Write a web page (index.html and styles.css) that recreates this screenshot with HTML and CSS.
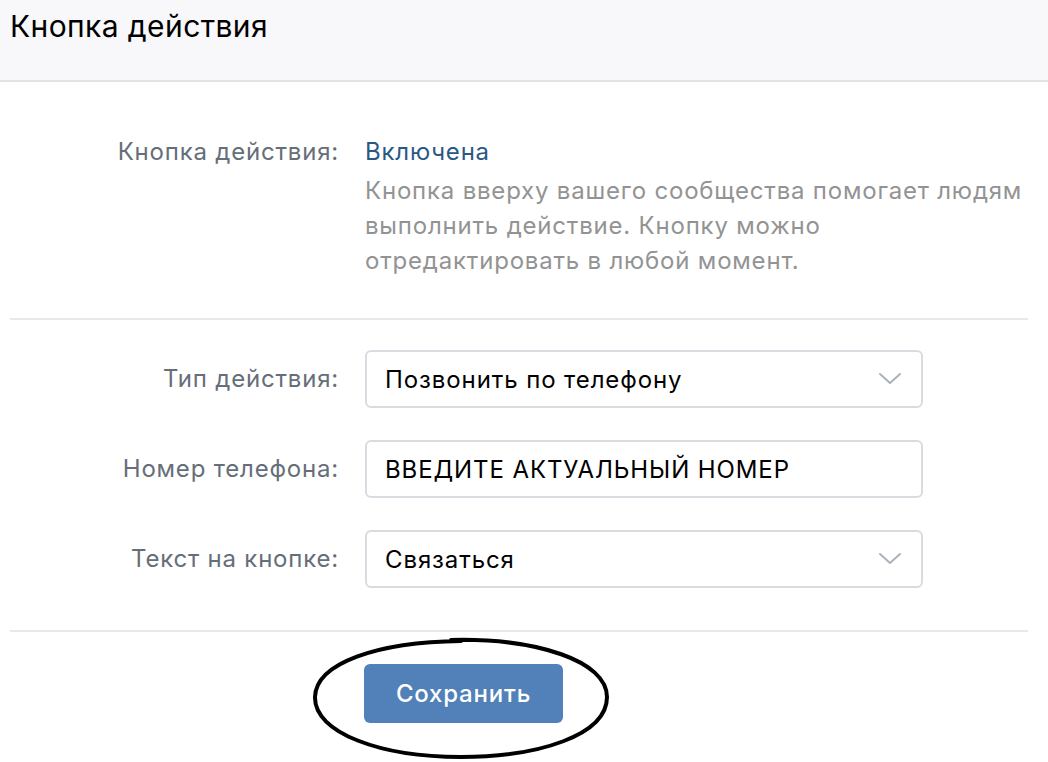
FILE: index.html
```html
<!DOCTYPE html>
<html lang="ru">
<head>
    <meta charset="UTF-8">
    <meta name="viewport" content="width=device-width, initial-scale=1.0">
    <title>Кнопка действия</title>
    <link rel="stylesheet" href="styles.css">
</head>
<body>
    <div class="page-header">
        <h1>Кнопка действия</h1>
    </div>

    <div class="section">
        <div class="row row-top">
            <div class="label">Кнопка действия:</div>
            <div class="value">
                <a class="status-link" href="#">Включена</a>
                <p class="hint">Кнопка вверху вашего сообщества помогает людям выполнить действие. Кнопку можно отредактировать в любой момент.</p>
            </div>
        </div>
    </div>

    <div class="divider"></div>

    <div class="section section-form">
        <div class="row">
            <div class="label">Тип действия:</div>
            <div class="field select">
                <span>Позвонить по телефону</span>
                <svg class="chevron" width="24" height="14" viewBox="0 0 24 14"><path d="M2 2 L12 11 L22 2" fill="none" stroke="#aab2bd" stroke-width="2" stroke-linecap="round" stroke-linejoin="round"/></svg>
            </div>
        </div>
        <div class="row">
            <div class="label">Номер телефона:</div>
            <div class="field">
                <span>ВВЕДИТЕ АКТУАЛЬНЫЙ НОМЕР</span>
            </div>
        </div>
        <div class="row">
            <div class="label">Текст на кнопке:</div>
            <div class="field select">
                <span>Связаться</span>
                <svg class="chevron" width="24" height="14" viewBox="0 0 24 14"><path d="M2 2 L12 11 L22 2" fill="none" stroke="#aab2bd" stroke-width="2" stroke-linecap="round" stroke-linejoin="round"/></svg>
            </div>
        </div>
    </div>

    <div class="divider"></div>

    <div class="actions">
        <div class="save-wrap">
            <button class="button">Сохранить</button>
            <!-- hand-drawn ring around the save button -->
            <svg class="ring" width="300" height="124" viewBox="0 0 300 124">
                <path d="M140 3 C226 1 296 24 296 60 C296 98 228 120 150 120 C70 120 3 96 4 60 C5 26 66 5 150 4" fill="none" stroke="#000" stroke-width="4" stroke-linecap="round"/>
            </svg>
        </div>
    </div>
</body>
</html>
```

FILE: styles.css
```css
* {
    margin: 0;
    padding: 0;
    box-sizing: border-box;
}

body {
    background: #fff;
    font-family: Inter, Roboto, "Noto Sans", sans-serif;
    color: #000;
    width: 1048px;
    min-height: 762px;
}

.page-header {
    height: 82px;
    background: #f8f8fa;
    border-bottom: 2px solid #e1e3e6;
    padding: 6px 10px 0;
}

.page-header h1 {
    font-size: 30px;
    font-weight: 400;
    letter-spacing: 0.4px;
    line-height: 40px;
}

.section {
    padding: 52px 10px 40px;
}

.row {
    display: grid;
    grid-template-columns: 329px 558px;
    column-gap: 26px;
    align-items: center;
}

.row-top {
    align-items: start;
}

.label {
    text-align: right;
    font-size: 24px;
    letter-spacing: 0.8px;
    color: #656e79;
    line-height: 36px;
}

.status-link {
    display: block;
    font-size: 24px;
    letter-spacing: 0.8px;
    line-height: 36px;
    color: #2a5885;
    text-decoration: none;
}

.hint {
    margin-top: 3px;
    width: 664px;
    font-size: 24px;
    letter-spacing: 0.8px;
    line-height: 35px;
    color: #939393;
}

.divider {
    height: 2px;
    margin: 0 20px 0 10px;
    background: #e7e8ec;
}

.section-form {
    padding: 30px 10px 42px;
    display: flex;
    flex-direction: column;
    gap: 32px;
}

.field {
    height: 58px;
    border: 2px solid #d8dbe0;
    border-radius: 6px;
    padding: 0 18px;
    display: flex;
    align-items: center;
    justify-content: space-between;
    font-size: 24px;
    letter-spacing: 0.9px;
    color: #000;
}

.chevron {
    margin-right: 1px;
}

.actions {
    padding: 32px 0 0 364px;
}

.save-wrap {
    position: relative;
    width: 199px;
}

.button {
    display: block;
    width: 199px;
    height: 59px;
    background: #5181b8;
    color: #fff;
    border: none;
    border-radius: 6px;
    font-family: Inter, Roboto, "Noto Sans", sans-serif;
    font-size: 24px;
    font-weight: 500;
    letter-spacing: 0.8px;
    cursor: pointer;
}

.ring {
    position: absolute;
    left: -53px;
    top: -27px;
    pointer-events: none;
}
```
